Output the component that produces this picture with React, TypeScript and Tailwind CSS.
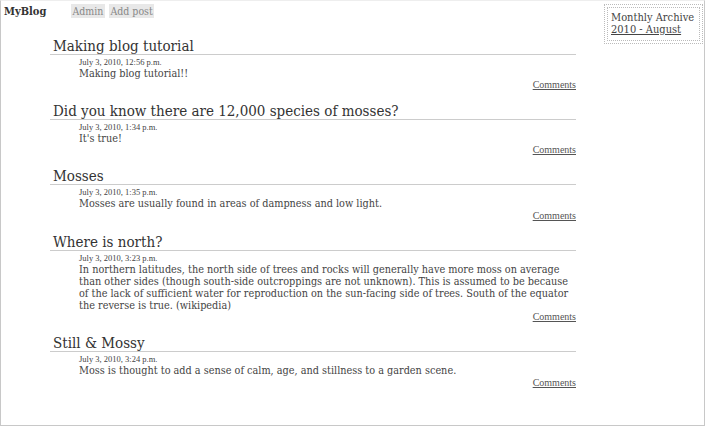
const posts = [
  {
    title: "Making blog tutorial",
    date: "July 3, 2010, 12:56 p.m.",
    body: "Making blog tutorial!!",
  },
  {
    title: "Did you know there are 12,000 species of mosses?",
    date: "July 3, 2010, 1:34 p.m.",
    body: "It's true!",
  },
  {
    title: "Mosses",
    date: "July 3, 2010, 1:35 p.m.",
    body: "Mosses are usually found in areas of dampness and low light.",
  },
  {
    title: "Where is north?",
    date: "July 3, 2010, 3:23 p.m.",
    body: "In northern latitudes, the north side of trees and rocks will generally have more moss on average than other sides (though south-side outcroppings are not unknown). This is assumed to be because of the lack of sufficient water for reproduction on the sun-facing side of trees. South of the equator the reverse is true. (wikipedia)",
  },
  {
    title: "Still & Mossy",
    date: "July 3, 2010, 3:24 p.m.",
    body: "Moss is thought to add a sense of calm, age, and stillness to a garden scene.",
  },
];

function Post({ title, date, body }: { title: string; date: string; body: string }) {
  return (
    <div className="mb-[16px]">
      <h2 className="border-b border-[#ccc] pl-[3px] text-[15px] leading-[16px] text-[#333]">
        {title}
      </h2>
      <div className="pl-[29px]">
        <div className="font-['Liberation_Serif',serif] text-[8.5px] leading-[11px] pt-[2px] text-[#444]">
          {date}
        </div>
        <p className="text-[10.8px] leading-[12.2px] text-[#444]">{body}</p>
      </div>
      <div className="pt-[2px] text-right font-['Liberation_Serif',serif] text-[10px] leading-[5px]">
        <a href="#" className="text-[#555] underline">
          Comments
        </a>
      </div>
    </div>
  );
}

export default function App() {
  return (
    <div className="w-[706px] h-[427px] bg-white font-['DejaVu_Serif_Condensed','DejaVu_Serif',serif]">
      <div className="flex h-[426px] w-[705px] border border-[#c8c8c8] border-t-[#eee]">
        {/* main column */}
        <div className="w-[603px]">
          <div className="flex items-start pl-[3px] pt-[3px]">
            <span className="w-[67px] text-[11px] font-bold leading-[16px] text-[#333]">MyBlog</span>
            <nav className="flex gap-[4px]">
              <a href="#" className="bg-[#e8e8e8] px-[1.5px] text-[10.5px] leading-[14px] text-[#888]">
                Admin
              </a>
              <a href="#" className="bg-[#e8e8e8] px-[1.5px] text-[10.5px] leading-[14px] text-[#888]">
                Add post
              </a>
            </nav>
          </div>
          <div className="ml-[49px] mt-[18px] w-[526px]">
            {posts.map((p) => (
              <Post key={p.title} {...p} />
            ))}
          </div>
        </div>

        {/* sidebar */}
        <aside className="mt-[3px] h-[40px] w-[99px] border border-dotted border-[#bbb] p-[2px]">
          <div className="h-full border border-dotted border-[#bbb] px-[3px] pt-[4px] text-[11px] leading-[12px] text-[#444]">
            <div>Monthly Archive</div>
            <a href="#" className="underline">
              2010 - August
            </a>
          </div>
        </aside>
      </div>
    </div>
  );
}
